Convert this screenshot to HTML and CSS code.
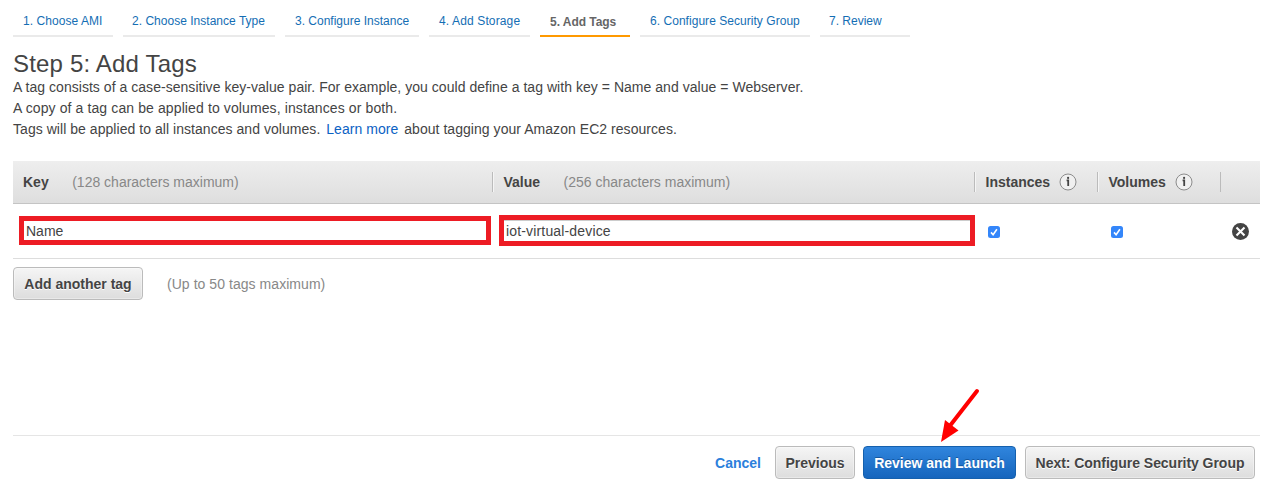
FILE: index.html
```html
<!DOCTYPE html>
<html lang="en">
<head>
<meta charset="utf-8">
<title>Step 5: Add Tags</title>
<link rel="stylesheet" href="styles.css">
</head>
<body>
<div class="wizard">
  <nav class="steps">
    <a class="step step-ami">1. Choose AMI</a>
    <a class="step step-type">2. Choose Instance Type</a>
    <a class="step step-instance">3. Configure Instance</a>
    <a class="step step-storage">4. Add Storage</a>
    <a class="step step-tags active">5. Add Tags</a>
    <a class="step step-security">6. Configure Security Group</a>
    <a class="step step-review">7. Review</a>
  </nav>
  <h1 class="title">Step 5: Add Tags</h1>
  <div class="intro">
    <p class="l1">A tag consists of a case-sensitive key-value pair. For example, you could define a tag with key = Name and value = Webserver.</p>
    <p class="l2">A copy of a tag can be applied to volumes, instances or both.</p>
    <p class="l3">Tags will be applied to all instances and volumes. <a class="learn">Learn more</a> about tagging your Amazon EC2 resources.</p>
  </div>
  <div class="grid-row table-head">
    <div class="cell"><b>Key</b><span class="hint">(128 characters maximum)</span></div>
    <div class="cell"><b>Value</b><span class="hint">(256 characters maximum)</span></div>
    <div class="cell"><b>Instances</b><svg class="info" viewBox="0 0 18 18"><circle cx="9" cy="9" r="8" fill="#f0f0f0" stroke="#8c8c8c"/><path d="M7.6 7.4H9.2V13" fill="none" stroke="#444" stroke-width="1.8"/><circle cx="9.1" cy="4.9" r="1.1" fill="#444"/></svg></div>
    <div class="cell"><b>Volumes</b><svg class="info" viewBox="0 0 18 18"><circle cx="9" cy="9" r="8" fill="#f0f0f0" stroke="#8c8c8c"/><path d="M7.6 7.4H9.2V13" fill="none" stroke="#444" stroke-width="1.8"/><circle cx="9.1" cy="4.9" r="1.1" fill="#444"/></svg></div>
    <div class="cell"></div>
  </div>
  <div class="grid-row table-row">
    <div class="field field-key">Name</div>
    <div class="field field-value">iot-virtual-device</div>
    <svg class="check" viewBox="0 0 12 12"><rect width="12" height="12" rx="2.5" fill="#3486fa"/><path d="M3 6.4L5.1 8.7L8.9 3.3" fill="none" stroke="#fff" stroke-width="1.6"/></svg>
    <svg class="check" viewBox="0 0 12 12"><rect width="12" height="12" rx="2.5" fill="#3486fa"/><path d="M3 6.4L5.1 8.7L8.9 3.3" fill="none" stroke="#fff" stroke-width="1.6"/></svg>
    <svg class="remove" viewBox="0 0 17 17"><circle cx="8.5" cy="8.5" r="8.5" fill="#444"/><path d="M4.5 4.5L12.5 12.5M12.5 4.5L4.5 12.5" stroke="#fff" stroke-width="2.1"/></svg>
  </div>
  <div class="add-row">
    <button class="btn btn-add"><span>Add another tag</span></button>
    <span class="limit">(Up to 50 tags maximum)</span>
  </div>
  <footer class="actions">
    <a class="cancel">Cancel</a>
    <button class="btn btn-prev"><span>Previous</span></button>
    <button class="btn btn-launch"><span>Review and Launch</span></button>
    <button class="btn btn-next"><span>Next: Configure Security Group</span></button>
  </footer>
  <svg class="arrow" viewBox="0 0 50 60"><path d="M42 6L14 42" stroke="#f00" stroke-width="4" stroke-linecap="round"/><path d="M6 57L10 35L23.5 45.5Z" fill="#f00"/></svg>
</div>
</body>
</html>
```
FILE: styles.css
```css
* { box-sizing: border-box; }
body {
  margin: 0;
  background: #fff;
  color: #444;
  font: 14px/21px "Liberation Sans", Arial, sans-serif;
}
.wizard {
  position: relative;
  display: flex;
  flex-direction: column;
  height: 491px;
  padding: 0 5px 0 13px;
  overflow: hidden;
}
.steps { display: flex; gap: 10px; height: 37px; }
.step {
  height: 37px;
  padding: 11px 0 0 10px;
  border-bottom: 2px solid #eaeaea;
  color: #146eb4;
  font-size: 12px;
  white-space: nowrap;
}
.step-ami { width: 100px; letter-spacing: .06px; }
.step-type { width: 152px; padding-left: 9px; letter-spacing: .02px; }
.step-instance { width: 134px; }
.step-storage { width: 101px; letter-spacing: .13px; }
.step-tags { width: 90px; letter-spacing: -.04px; }
.step-security { width: 170px; letter-spacing: .04px; }
.step-review { width: 90px; padding-left: 9px; }
.step.active { padding-top: 12px; border-color: #f90; color: #666; font-weight: bold; }
.title { margin: 13px 0 0; font-size: 24px; font-weight: normal; line-height: 28px; letter-spacing: .18px; }
.intro { height: 83px; margin-top: -1px; padding-top: 0; }
.intro p { margin: 0; white-space: nowrap; }
.intro .l1 { letter-spacing: .037px; }
.intro .l2 { letter-spacing: .11px; }
.intro .l3 { letter-spacing: .045px; }
.learn { margin: 0 2px; color: #0b62c4; }
.grid-row { display: grid; grid-template-columns: 479px 482px 123px 123px 40px; }
.table-head {
  height: 43px;
  margin-top: 1px;
  align-items: center;
  border-bottom: 1px solid #c4c4c4;
  background: linear-gradient(#eee, #dedede);
}
.cell { display: flex; align-items: center; height: 20px; padding-left: 10.5px; border-left: 1px solid #bbb; box-shadow: inset 1px 0 #f5f5f5; }
.cell:first-child { padding-left: 10px; border: 0; box-shadow: none; }
.cell:last-child { box-shadow: none; }
.hint { margin-left: 23.5px; color: #888; }
.info { width: 18px; height: 18px; margin-left: 9px; }
.table-row { height: 55px; align-items: center; border-bottom: 1px solid #ddd; }
.field { margin-bottom: 2px; border: 5px solid #ed1c24; padding-left: 2px; white-space: nowrap; }
.field-key { width: 472px; height: 29px; margin-left: 6px; line-height: 21px; }
.field-value { width: 476px; height: 31px; margin-left: 7px; line-height: 23px; letter-spacing: .16px; box-shadow: inset 0 1px #ccc; }
.check { width: 12px; height: 12px; margin: 2px 0 0 14px; }
.remove { width: 17px; height: 17px; margin-left: 12px; }
.add-row { display: flex; align-items: center; gap: 24px; height: 33px; margin-top: 8px; }
.limit { padding-top: 2px; color: #888; letter-spacing: .05px; }
.btn {
  height: 33px;
  padding: 2px 0 0;
  border: 1px solid #bbb;
  border-radius: 4px;
  background: linear-gradient(#f5f5f5, #ddd);
  box-shadow: inset 0 0 0 1px rgba(255,255,255,.35);
  color: #444;
  font: bold 14px/21px "Liberation Sans", Arial, sans-serif;
  text-shadow: 0 1px #fff;
  white-space: nowrap;
}
.btn-add { width: 130px; }
.btn-prev { width: 80px; margin-left: 14px; }
.btn-launch {
  width: 153px;
  margin-left: 8px;
  border-color: #1560ad;
  background: linear-gradient(#3085dd, #1565bd);
  box-shadow: none;
  color: #fff;
  text-shadow: 0 -1px #1457a0;
}
.btn-next { width: 230px; margin-left: 9px; letter-spacing: -.04px; }
.actions {
  display: flex;
  align-items: center;
  justify-content: flex-end;
  height: 56px;
  margin-top: auto;
  padding: 0 5px 2px 0;
  border-top: 1px solid #e5e5e5;
}
.cancel { padding-top: 1px; color: #2b80dc; font-weight: bold; }
.arrow { position: absolute; left: 935px; top: 385px; width: 50px; height: 60px; }
```
